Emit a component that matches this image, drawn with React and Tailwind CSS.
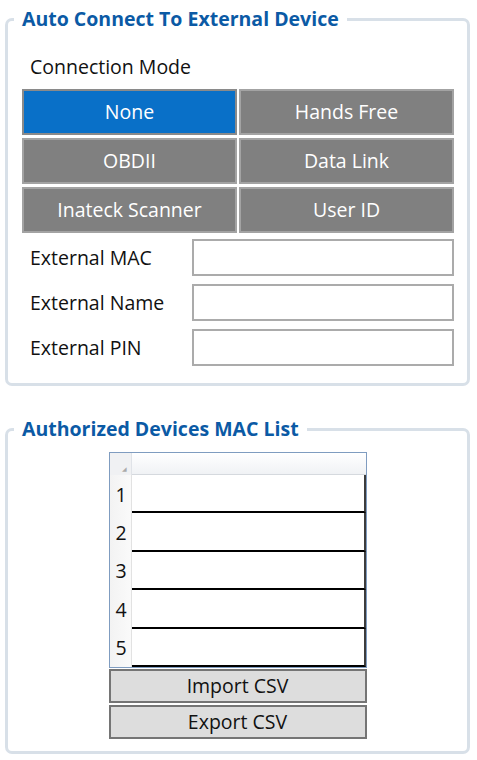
import React from "react";

const font = { fontFamily: '"Open Sans", "Noto Sans", sans-serif' };

function ModeButton({ label, active }) {
  return (
    <div
      className={
        "h-[46px] flex items-center justify-center text-white text-[19.5px] border-2 " +
        (active ? "bg-[#0970c8] border-[#8a8a8a]" : "bg-[#808080] border-[#a3a3a3]")
      }
    >
      {label}
    </div>
  );
}

function FieldRow({ label }) {
  return (
    <div className="flex items-center h-[37px]">
      <div className="w-[170px] pl-[8px] text-[19.5px] text-[#111]">{label}</div>
      <div className="flex-1 h-[37px] border-2 border-[#ababab] bg-white" />
    </div>
  );
}

export default function App() {
  const rows = [1, 2, 3, 4, 5];
  return (
    <div className="w-[477px] h-[760px] bg-white relative overflow-hidden" style={font}>
      <div className="pl-[5px] pr-[7px] pt-[5px]">
        <fieldset className="border-[3px] border-[#d8e0e8] rounded-[7px] pl-[14px] pr-[13px] pb-[17px]">
          <legend className="-ml-[8px] px-[8px] text-[19.5px] font-bold text-[#0b5aa5] leading-[28px]">
            Auto Connect To External Device
          </legend>
          <div className="pl-[8px] pt-[20px] text-[19.5px] leading-[28px] text-[#111]">Connection Mode</div>
          <div className="mt-[8px] grid grid-cols-2 gap-x-[2px] gap-y-[3px]">
            <ModeButton label="None" active />
            <ModeButton label="Hands Free" />
            <ModeButton label="OBDII" />
            <ModeButton label="Data Link" />
            <ModeButton label="Inateck Scanner" />
            <ModeButton label="User ID" />
          </div>
          <div className="mt-[6px] flex flex-col gap-[8px]">
            <FieldRow label="External MAC" />
            <FieldRow label="External Name" />
            <FieldRow label="External PIN" />
          </div>
        </fieldset>

        <fieldset className="mt-[29px] border-[3px] border-[#d8e0e8] rounded-[7px] pl-[14px] pr-[13px] pb-[12px]">
          <legend className="-ml-[8px] px-[8px] text-[19.5px] font-bold text-[#0b5aa5] leading-[28px]">
            Authorized Devices MAC List
          </legend>
          <div className="pt-[9px] flex justify-center">
            <div className="w-[258px] -ml-[1px]">
              <div className="border border-[#7f9cc0]">
                <div className="flex h-[22px]">
                  <div className="w-[22px] bg-[#f0f1f3] border-r border-[#e0e3e8] relative">
                    <span className="absolute right-[4px] bottom-[3px] text-[6px] leading-none text-[#aaa]">◢</span>
                  </div>
                  <div className="flex-1 bg-gradient-to-b from-[#ffffff] to-[#f0f2f5] border-b border-[#d5d9de]" />
                </div>
                {rows.map((n) => (
                  <div key={n} className="flex h-[38.4px]">
                    <div className="w-[22px] bg-gradient-to-r from-[#f3f3f3] to-[#fafafa] border-r border-[#e2e2e2] flex items-center pl-[6px] text-[19.5px] text-[#111]">
                      {n}
                    </div>
                    <div className="flex-1 bg-white border-r-2 border-[#3c3c3c] border-b-2 border-b-[#000]" />
                  </div>
                ))}
              </div>
              <div className="flex flex-col gap-[2px] mt-[1px]">
                <div className="h-[34px] bg-[#dddddd] border-2 border-[#757575] flex items-center justify-center text-[19.5px] text-[#111]">
                  Import CSV
                </div>
                <div className="h-[34px] bg-[#dddddd] border-2 border-[#757575] flex items-center justify-center text-[19.5px] text-[#111]">
                  Export CSV
                </div>
              </div>
            </div>
          </div>
        </fieldset>
      </div>
    </div>
  );
}
